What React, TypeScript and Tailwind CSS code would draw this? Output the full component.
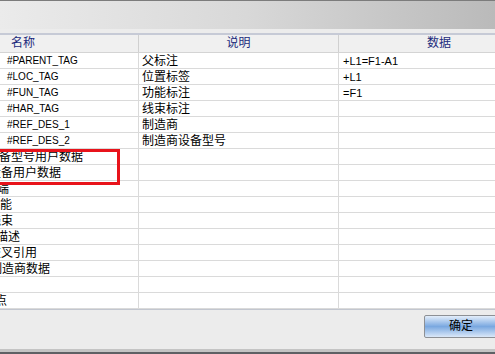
const FONT = '"Liberation Sans", "Noto Sans CJK SC", sans-serif';

type Row = { name: string; pl: number; desc?: string; data?: string; latin?: boolean };

const rows: Row[] = [
  { name: "#PARENT_TAG", pl: 99, desc: "父标注", data: "+L1=F1-A1", latin: true },
  { name: "#LOC_TAG", pl: 99, desc: "位置标签", data: "+L1", latin: true },
  { name: "#FUN_TAG", pl: 99, desc: "功能标注", data: "=F1", latin: true },
  { name: "#HAR_TAG", pl: 99, desc: "线束标注", latin: true },
  { name: "#REF_DES_1", pl: 99, desc: "制造商", latin: true },
  { name: "#REF_DES_2", pl: 99, desc: "制造商设备型号", latin: true },
  { name: "设备型号用户数据", pl: 79 },
  { name: "设备用户数据", pl: 81 },
  { name: "终端", pl: 77 },
  { name: "功能", pl: 80 },
  { name: "线束", pl: 81 },
  { name: "描述", pl: 88 },
  { name: "交叉引用", pl: 81 },
  { name: "制造商数据", pl: 82 },
  { name: "", pl: 80 },
  { name: "连接点", pl: 63 },
];

export default function App() {
  return (
    <div
      className="relative w-[495px] h-[354px] overflow-hidden bg-[#ececec] text-black"
      style={{ fontFamily: FONT }}
    >
      {/* title strip */}
      <div className="h-px bg-[#7c7c7c]" />
      <div className="h-[28px] bg-gradient-to-r from-[#ebebeb] via-[#d8d8d8] to-[#bababa]" />
      <div className="h-[4px] bg-[#ececec]" />
      <div className="h-[2px] bg-[#c6cad6]" />

      {/* table */}
      <div className="ml-[-92px] w-[640px] bg-white">
        <div className="flex h-[18px] bg-[#f0f0f0] border-b border-[#d4d4d4] text-[12px] leading-[17px] text-[#1b2a7c]">
          <div className="w-[231px] text-center border-r border-[#d0d0d0]">名称</div>
          <div className="w-[200px] text-center border-r border-[#d0d0d0]">说明</div>
          <div className="w-[200px] text-center">数据</div>
        </div>
        {rows.map((r, i) => (
          <div key={i} className="flex h-[16px] border-b border-[#dadada] leading-[16px]">
            <div
              className={`w-[231px] shrink-0 whitespace-nowrap border-r border-[#dadada] ${r.latin ? "text-[10px]" : "text-[12px]"}`}
              style={{ paddingLeft: r.pl }}
            >
              {r.name}
            </div>
            <div className="w-[200px] shrink-0 pl-[3px] text-[12px] whitespace-nowrap border-r border-[#dadada]">
              {r.desc}
            </div>
            <div className="w-[200px] shrink-0 pl-[4px] text-[11px] whitespace-nowrap">{r.data}</div>
          </div>
        ))}
      </div>
      <div className="h-px bg-[#c2c6cf]" />

      {/* footer */}
      <div className="flex h-[39px] justify-end items-start pt-[5px]">
        <button className="mr-[-3px] w-[74px] h-[23px] rounded-[2px] border border-[#8d9095] bg-gradient-to-b from-[#e4eefa] via-[#7aa8e0] to-[#dbe8f8] text-[12px] leading-[21px] text-black">
          确定
        </button>
      </div>
      <div className="h-[3px] bg-[#c4c4c4]" />
      <div className="h-[3px] bg-[#5e6064]" />

      {/* highlight */}
      <div className="absolute left-[-5px] top-[149px] w-[125px] h-[36px] border-[3px] border-[#e8131b]" />
    </div>
  );
}
